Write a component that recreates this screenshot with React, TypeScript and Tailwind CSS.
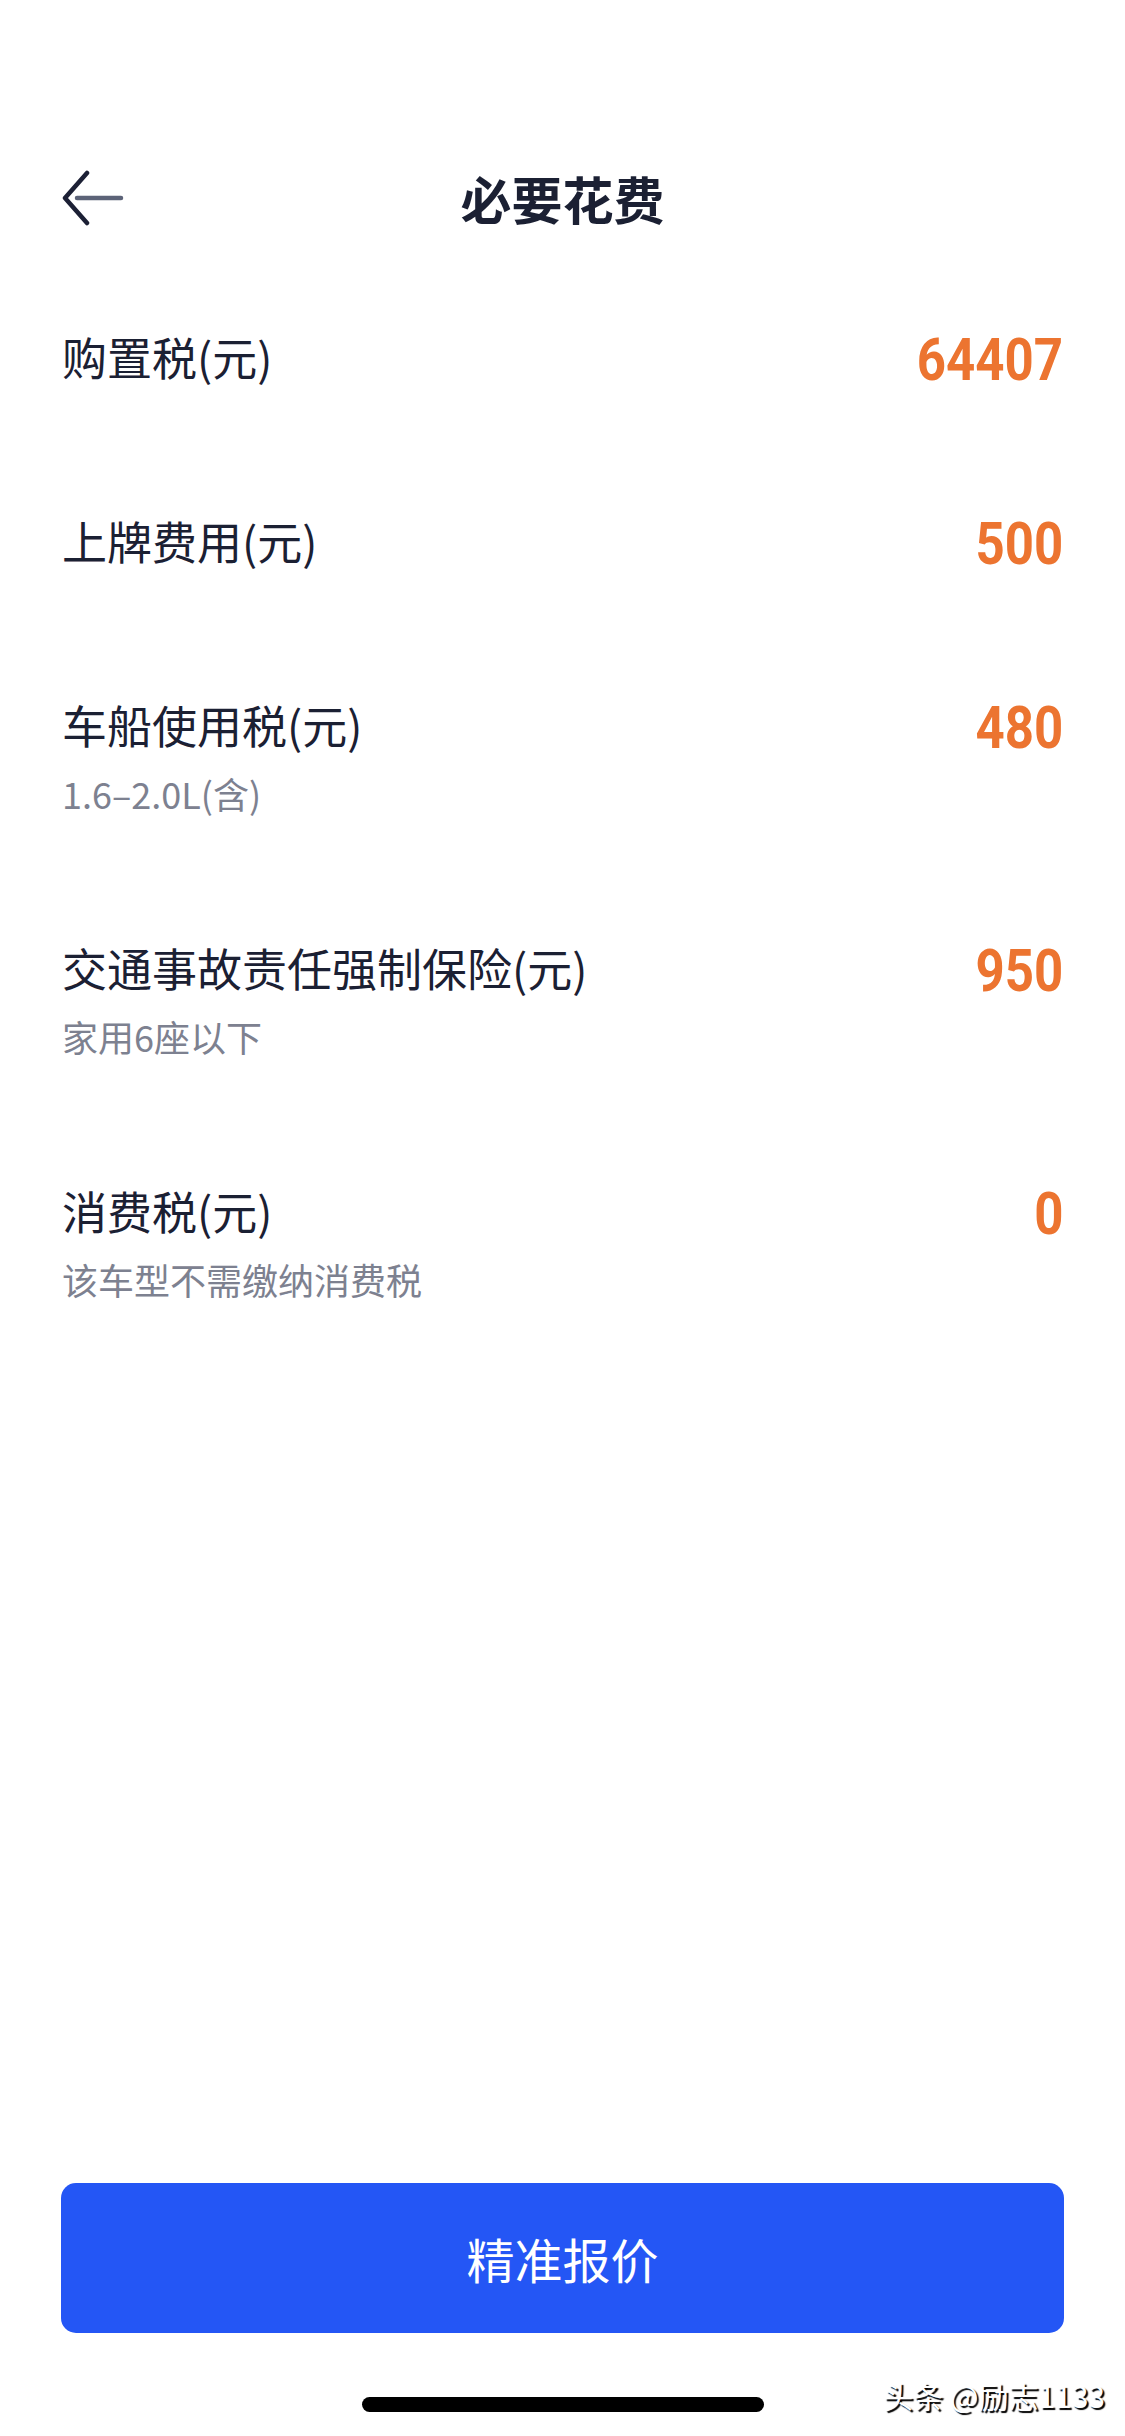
import React from "react";

type Fee = {
    label: string
    value: string
    note?: string
}

const fees: Fee[] = [
    { label: "购置税(元)", value: "64407" },
    { label: "上牌费用(元)", value: "500" },
    { label: "车船使用税(元)", value: "480", note: "1.6–2.0L(含)" },
    { label: "交通事故责任强制保险(元)", value: "950", note: "家用6座以下" },
    { label: "消费税(元)", value: "0", note: "该车型不需缴纳消费税" },
];

const cjk = { fontFamily: '"Noto Sans CJK SC", "Noto Sans", sans-serif' };
const digits = { fontFamily: 'Roboto, "Liberation Sans", sans-serif' };

function BackArrow() {
    return (
        <svg width="62" height="56" viewBox="0 0 62 56" fill="none">
            <path d="M25 3 L3 28 L25 53" stroke="#1c2035" strokeWidth="4.5" strokeLinecap="round" strokeLinejoin="round" />
            <path d="M15 28 H59" stroke="#5c6378" strokeWidth="4.5" strokeLinecap="round" />
        </svg>
    );
}

function FeeRow({ fee }: { fee: Fee }) {
    return (
        <div className={fee.note ? "flex justify-between items-start pt-[65px] pb-[62px]" : "flex justify-between items-start pt-[65px] pb-[65px]"}>
            <div className="flex flex-col">
                <span className="text-[45px] leading-[48px] text-[#1b2033]" style={cjk}>{fee.label}</span>
                {fee.note && (
                    <span className="mt-[20px] text-[36px] leading-[48px] text-[#7d8190]" style={cjk}>{fee.note}</span>
                )}
            </div>
            <span
                className="inline-block origin-right scale-x-[0.85] text-[60px] leading-[54px] font-bold text-[#ec7430]"
                style={digits}
            >
                {fee.value}
            </span>
        </div>
    );
}

export default function App() {
    return (
        <div className="relative w-[1125px] h-[2436px] bg-white flex flex-col overflow-hidden">
            {/* header */}
            <div className="mt-[148px] h-[100px] px-[62px] grid grid-cols-[1fr_auto_1fr] items-center">
                <div className="flex items-center">
                    <BackArrow />
                </div>
                <h1 className="text-[51px] font-bold text-[#1b2033]" style={cjk}>必要花费</h1>
                <div />
            </div>

            <div className="mt-[20px] px-[62px] flex flex-col">
                {fees.map((fee) => (
                    <FeeRow key={fee.label} fee={fee} />
                ))}
            </div>

            <div className="mt-auto px-[61px]">
                <button className="w-full h-[150px] rounded-[15px] bg-[#2456f5] text-white text-[48px] flex items-center justify-center" style={cjk}>
                    精准报价
                </button>
            </div>

            <div className="h-[103px] flex justify-center">
                <div className="mt-[64px] w-[402px] h-[15px] rounded-full bg-black" />
            </div>

            <div
                className="absolute right-[20px] bottom-[21px] text-[30px] leading-[40px] text-white [text-shadow:2px_2px_1px_#000]"
                style={cjk}
            >
                头条 @励志1133
            </div>
        </div>
    );
}
